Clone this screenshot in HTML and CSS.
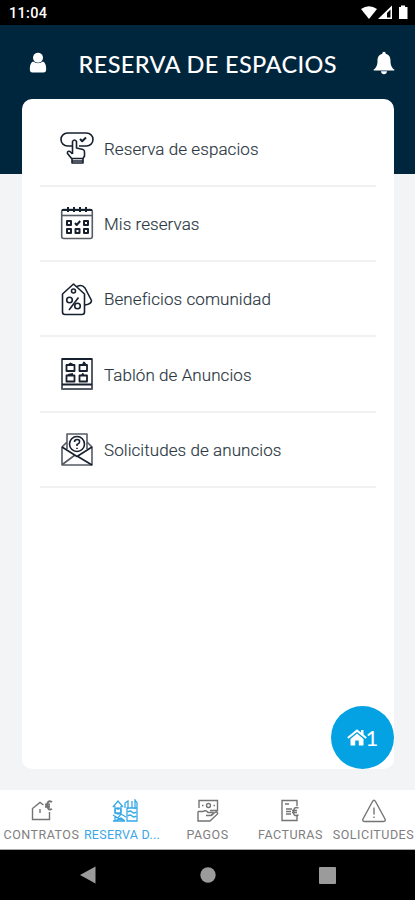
FILE: index.html
```html
<!DOCTYPE html>
<html lang="es">
<head>
<meta charset="utf-8">
<meta name="viewport" content="width=device-width">
<title>Reserva de espacios</title>
<link rel="stylesheet" href="styles.css">
</head>
<body>
<div class="status">
  <span class="clock">11:04</span>
  <svg class="status-icons" width="50" height="16" viewBox="0 0 50 16" fill="#fff"><path d="M0 4Q8-1.600 16 4L8 14Z"/><path fill-rule="evenodd" d="M17 14 31 .5V14ZM26 12.500H29.500V4.500L26 8Z"/><path d="M38 2H40V.5H44V2H46.500V14H38Z"/></svg>
</div>
<header class="header">
  <svg class="user" width="18" height="22" viewBox="0 0 18 22" fill="#fff"><circle cx="9" cy="5.800" r="5"/><path d="M4 9.500Q9 13 14 9.500Q17.200 11 17.200 17Q17.200 20.500 14.500 20.500H3.500Q.8 20.500.8 17Q.8 11 4 9.500Z"/></svg>
  <h1 class="title">RESERVA DE ESPACIOS</h1>
  <svg class="bell" width="22" height="24" viewBox="0 0 22 24" fill="#fff"><path d="M11 .8c1.100 0 1.700.8 1.700 2 3.500.8 4.800 3.500 4.800 6.900 0 5 1.500 7 3.800 8.900v1H.7v-1c2.300-1.900 3.800-3.900 3.800-8.900 0-3.400 1.300-6.100 4.800-6.900 0-1.200.6-2 1.700-2ZM8 20.200h6c0 4-6 4-6 0Z"/></svg>
</header>
<main class="content">
  <ul class="card">
    <li class="row">
      <svg class="icon" viewBox="0 0 34 34"><path d="M12 15H7.500A6 6 0 0 1 7.500 2H26.500A6 6 0 0 1 26.500 15H19"/><path d="m20 8 2.200 2.200L26 6.500" stroke-width="2"/><path d="M12.500 23V10.500Q14.500 7.500 16.500 10.500V17L23 18.500Q24.500 19 24.500 21V25L23 27.500V32H12V28L7.500 22.500Q7 19.500 10 20.500L12.500 23M12 27.500H23M12 30H23"/></svg>
      <span class="label">Reserva de espacios</span>
    </li>
    <li class="row">
      <svg class="icon" viewBox="0 0 34 34"><rect class="soft" x="1.700" y="3.500" width="30.600" height="29" rx="2"/><path class="soft" d="M2 9.500H32"/><path d="M2 4H32M8 1V6M14 1V6M20 1V6M26 1V6M15 17l1.700 2 3.500-4" stroke-width="2"/><path stroke-width="2" d="M7 15h4v4H7zM24 15h4v4h-4zM7 23h4v4H7zM15.500 23h4v4h-4zM24 23h4v4h-4z"/></svg>
      <span class="label">Mis reservas</span>
    </li>
    <li class="row">
      <svg class="icon" viewBox="0 0 34 34"><path d="M2.500 12 13.500 2 24.500 12V30Q24.500 32.500 22 32.500H5Q2.500 32.500 2.500 30ZM17 4.500Q22 2 25 6L31.500 18.500Q31.500 22 25 23"/><circle cx="13.500" cy="9" r="2"/><circle cx="9.500" cy="18" r="2.800"/><circle cx="17.500" cy="24" r="2.800"/><path d="M18.500 15.500 9 28"/></svg>
      <span class="label">Beneficios comunidad</span>
    </li>
    <li class="row">
      <svg class="icon" viewBox="0 0 34 34"><path class="soft" d="M2 2H32V32H2Z" stroke-width="2"/><path d="M2 2H32M2 27.500H32" stroke-width="1.800"/><path d="M6.500 8h8v6h-8zM19.500 8h7.500v6h-7.500zM6.500 18.500h8v6h-8zM19.500 18.500h7.500v6h-7.500zM9 7.500l1.500-1 2 1M23 7.500l1-2 1.500 2M8 18l5-1M22 18l1.500-1.500" stroke-width="1.800"/></svg>
      <span class="label">Tablón de Anuncios</span>
    </li>
    <li class="row">
      <svg class="icon" viewBox="0 0 34 34"><path class="soft" d="M7 17V2H27V17M7 10 2 15V33H32V15L27 10M3 32l12-9"/><path d="m2 15 15 9.500L32 15M17 24l15 9"/><circle cx="17" cy="12" r="7.500"/><path d="M14.500 10Q14.500 7.500 17.200 7.500T19.500 10Q19.500 11.500 17 12.500V14M17 15.800V17"/></svg>
      <span class="label">Solicitudes de anuncios</span>
    </li>
  </ul>
</main>
<button class="fab">
  <svg width="20" height="17" viewBox="0 0 20 17"><path fill="#fff" d="M3.500 10 10 4.500l6.500 5.500v6.500h-4.700v-5H8.200v5H3.500ZM14 1h2.500v5.500L14 4.500Z"/><path fill="none" stroke="#fff" stroke-width="2" d="M.8 9 10 1.600 19.200 9"/></svg><span>1</span>
</button>
<nav class="tabs">
  <a class="tab"><svg width="24" height="24" viewBox="0 0 24 24"><path d="M13.500 6 10 3.500 2.500 9.500V20.500H19.500V13M10 10V14"/><path stroke-width="1.900" d="M22 3Q17.500.5 17 6.500Q18 12 22 10M15 5.500h5M15 7.800h5"/></svg><span>CONTRATOS</span></a>
  <a class="tab active"><svg width="28" height="24" viewBox="0 0 28 24"><path d="M2 8 7 2l5 6M4 7v7h6V7M6 10h2M14 9V4l3-2v8M21 9V2M24 10V1l2 3v18H16V9h10M17 13q2-2 4 0t4 0M17 17q2-2 4 0t4 0M2 16l5 3 3-4 5 3M2 22h12L4 18v4l6-3 4 3"/><circle cx="7" cy="12" r="3"/></svg><span>RESERVA D...</span></a>
  <a class="tab"><svg width="24" height="24" viewBox="0 0 24 24"><path d="M3 9V1.500H21.500V11.500H14M2 12.500H7q3-2 5 1h5q1 2-2 3H10M15 16l5-3q2 0 1.500 2L14 22H2V12.500"/><circle cx="12.500" cy="6.500" r="2"/><path d="M6 6.500h1.500M17.500 6.500H19"/></svg><span>PAGOS</span></a>
  <a class="tab"><svg width="24" height="24" viewBox="0 0 24 24"><path d="M18 7V1.500H3V21.500H18V17M6 5h4M7 10h6M7 12.500h5M7 15h5"/><path d="M19.500 9Q15 7 14.500 12.500T19.500 16M13 11.500h5M13 13.500h5"/></svg><span>FACTURAS</span></a>
  <a class="tab"><svg width="24" height="24" viewBox="0 0 24 24"><path d="M10.500 2.500Q12 0 13.500 2.500L23 20Q24 22.500 21 22.500H3Q0 22.500 1 20ZM12 8.500V15.500M12 17.500V19"/></svg><span>SOLICITUDES</span></a>
</nav>
<div class="system">
  <svg width="16" height="18" viewBox="0 0 16 18"><path d="M15.500.5V17.500L0 9Z"/></svg>
  <svg width="16" height="16" viewBox="0 0 16 16"><circle cx="8" cy="8" r="7.700"/></svg>
  <svg width="17" height="17" viewBox="0 0 17 17"><rect width="17" height="17" rx="1"/></svg>
</div>
</body>
</html>
```
FILE: styles.css
```css
* { box-sizing: border-box; }
body { margin: 0; width: 415px; height: 900px; overflow: hidden; display: flex; flex-direction: column; background: #f3f4f6; font-family: Roboto, sans-serif; }
svg { display: block; flex: none; }
.status { height: 25px; flex: none; background: #000; display: flex; justify-content: space-between; align-items: center; padding: 1px 7px 0 9px; color: #fff; }
.clock { font-size: 14.5px; font-weight: 500; line-height: 18px; padding-top: 2px; letter-spacing: .3px; }
.status-icons { margin-right: -3px; }
.header { height: 149px; flex: none; background: #00263d; display: flex; align-items: flex-start; padding: 26px 20px 0 29px; }
.user { margin-top: 1px; }
.title { margin: -2px 0 0 31.5px; width: 262px; flex: none; font: 500 23.5px/30px Lato, sans-serif; letter-spacing: .38px; color: #fff; white-space: nowrap; }
.bell { margin-left: auto; margin-right: 0; }
.content { flex: 1; min-height: 0; padding: 0 21px 21px 22px; margin-top: -75px; }
.card { height: 670px; margin: 0; padding: 12.5px 18px; background: #fff; border-radius: 10px; list-style: none; }
.row { height: 75.3px; display: flex; align-items: center; padding-left: 20px; border-bottom: 2px solid #f0f1f2; }
.icon { width: 34px; height: 34px; fill: none; stroke: #17202f; stroke-width: 1.6; stroke-linejoin: round; }
.soft { stroke: #555c65; }
.label { margin-left: 10px; padding-top: 1px; font-size: 17px; line-height: 22px; font-weight: 300; color: #2b3742; letter-spacing: .07px; -webkit-text-stroke: .15px #2b3742; white-space: nowrap; }
.fab { position: absolute; left: 331px; top: 706px; width: 63px; height: 63px; border: 0; border-radius: 50%; padding: 0; background: #05a2e3; color: #fff; display: flex; align-items: center; justify-content: center; font: 22px/28px Lato, sans-serif; }
.fab span { margin-left: -1px; }
.tabs { height: 60px; flex: none; background: #fff; border-bottom: 1px solid #aaa; display: grid; grid-template-columns: repeat(5, 83px); }
.tab { display: flex; flex-direction: column; align-items: center; padding-top: 9px; font-size: 12.5px; line-height: 18px; color: #808080; letter-spacing: .5px; white-space: nowrap; }
.tab svg { fill: none; stroke: #747474; stroke-width: 1.4; }
.tab span { margin-top: 2.5px; }
.tab.active { color: #3ba7e9; letter-spacing: .25px; }
.tab.active svg { stroke: #36a9e8; stroke-width: 1.3; }
.tab.active span { margin-right: 5px; }
.system { height: 50px; flex: none; background: #000; display: flex; align-items: center; justify-content: space-between; padding: 0 79px 0 80px; fill: #9b9b9b; }
```
